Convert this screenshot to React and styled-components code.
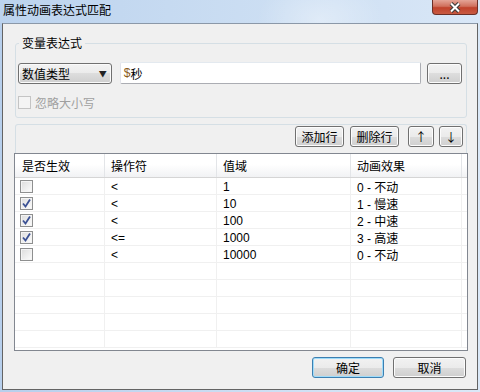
import React from 'react';
import styled, { createGlobalStyle } from 'styled-components';

const GlobalStyle = createGlobalStyle`
  html, body {
    margin: 0;
    padding: 0;
    background: #c8dcf2;
  }
  body {
    font-family: "Liberation Sans", "Noto Sans CJK SC", sans-serif;
    font-size: 12px;
    color: #000;
  }
`;

const rows = [
  { on: false, op: '<', range: '1', effect: '0 - 不动' },
  { on: true, op: '<', range: '10', effect: '1 - 慢速' },
  { on: true, op: '<', range: '100', effect: '2 - 中速' },
  { on: true, op: '<=', range: '1000', effect: '3 - 高速' },
  { on: false, op: '<', range: '10000', effect: '0 - 不动' },
  null,
  null,
  null,
  null,
  null,
];

const CheckBox = ({ checked, disabled }) => (
  <Box $disabled={disabled}>
    {checked && (
      <svg width="11" height="11" viewBox="0 0 11 11">
        <path d="M2 5.5 L4.5 8.5 L9 1.5" fill="none" stroke="#3b5194" strokeWidth="1.8" />
      </svg>
    )}
  </Box>
);

const App = () => {
  return (
    <Window>
      <GlobalStyle />
      <TitleBar>
        <Title>属性动画表达式匹配</Title>
        <CloseButton>
          <svg width="14" height="11" viewBox="0 0 14 11">
            <path d="M3 1.5 L11 9.5 M11 1.5 L3 9.5" stroke="#3a3a3a" strokeWidth="4" />
            <path d="M3 1.5 L11 9.5 M11 1.5 L3 9.5" stroke="#fff" strokeWidth="2" />
          </svg>
        </CloseButton>
      </TitleBar>

      <Client>
        <Group>
          <Legend>变量表达式</Legend>
          <ExprRow>
            <Select>
              <span>数值类型</span>
              <Arrow>▼</Arrow>
            </Select>
            <Input>
              <Dollar>$</Dollar>秒
            </Input>
            <Button $w={35}>...</Button>
          </ExprRow>
          <CheckRow>
            <CheckBox disabled />
            <Label $disabled>忽略大小写</Label>
          </CheckRow>
        </Group>

        <Panel>
          <Toolbar>
            <Button $w={49}>添加行</Button>
            <Button $w={49}>删除行</Button>
            <Button $w={26} $gap={9}>↑</Button>
            <Button $w={24} $gap={5}>↓</Button>
          </Toolbar>

          <Grid>
            <HeadRow>
              <HeadCell $first>是否生效</HeadCell>
              <HeadCell>操作符</HeadCell>
              <HeadCell>值域</HeadCell>
              <HeadCell>动画效果</HeadCell>
              <HeadCell $filler />
            </HeadRow>
            {rows.map((r, i) => (
              <Row key={i}>
                <Cell $check>{r && <CheckBox checked={r.on} />}</Cell>
                <Cell>{r && r.op}</Cell>
                <Cell>{r && r.range}</Cell>
                <Cell>{r && r.effect}</Cell>
                <Cell $filler />
              </Row>
            ))}
          </Grid>
        </Panel>

        <Footer>
          <Button $w={72} $h={21} $primary>确定</Button>
          <Button $w={73} $h={21} $gap={9}>取消</Button>
        </Footer>
      </Client>
    </Window>
  );
};

const Window = styled.div`
  width: 480px;
  height: 392px;
  display: flex;
  flex-direction: column;
  background: linear-gradient(to right, #b7cfec, #cfe0f4 60%, #dae8f7);
  overflow: hidden;
`;

const TitleBar = styled.div`
  height: 23px;
  display: flex;
  align-items: flex-start;
  justify-content: space-between;
  background:
    radial-gradient(ellipse 90px 60px at 320px 20px, rgba(255, 255, 255, 0.35), transparent 70%),
    linear-gradient(to right, #bcd3ee, #cddff3 60%, #d9e7f7);
`;

const Title = styled.div`
  padding: 3px 0 0 3px;
  line-height: 14px;
  font-family: "Noto Sans CJK SC", sans-serif;
  font-size: 12px;
  color: #000;
`;

const CloseButton = styled.div`
  width: 44px;
  height: 14px;
  margin-right: 2px;
  border: 1px solid #6b2f27;
  border-top: none;
  border-radius: 0 0 4px 4px;
  background: linear-gradient(#e4a497 0%, #d0705d 45%, #c0422c 55%, #c85a42 100%);
  display: flex;
  align-items: center;
  justify-content: center;
`;

const Client = styled.div`
  flex: 1;
  margin: 0 2px 2px 2px;
  border: 1px solid #646464;
  border-top-color: #8b98a8;
  background: #f0f0f0;
  padding: 12px 10px 0 12px;
  display: flex;
  flex-direction: column;
`;

const Group = styled.fieldset`
  margin: 0;
  min-width: 0;
  padding: 0 4px 8px 2px;
  border: 1px solid #d5dfe5;
  border-radius: 3px;
`;

const Legend = styled.legend`
  margin-left: 1px;
  padding: 0 3px;
  line-height: 14px;
  font-family: "Noto Sans CJK SC", sans-serif;
  font-size: 12px;
`;

const ExprRow = styled.div`
  margin-top: 12px;
  height: 22px;
  display: flex;
  align-items: center;
`;

const Select = styled.div`
  width: 94px;
  height: 21px;
  box-sizing: border-box;
  border: 1px solid #707070;
  border-radius: 3px;
  background: linear-gradient(#f2f2f2 0%, #ebebeb 50%, #dddddd 50%, #cfcfcf 100%);
  box-shadow: inset 0 0 0 1px #fafafa;
  display: flex;
  align-items: center;
  justify-content: space-between;
  padding: 0 4px 0 3px;
  font-family: "Noto Sans CJK SC", sans-serif;
`;

const Arrow = styled.span`
  font-size: 8px;
  color: #222;
`;

const Input = styled.div`
  width: 302px;
  height: 22px;
  box-sizing: border-box;
  margin-left: 8px;
  border: 1px solid #abadb3;
  border-top-color: #e3e9ef;
  border-left-color: #e2e3ea;
  border-radius: 2px;
  background: #fff;
  padding-left: 3px;
  display: flex;
  align-items: center;
  font-family: "Liberation Sans", "Noto Sans CJK SC", sans-serif;
`;

const Dollar = styled.span`
  color: #8a5a20;
`;

const Button = styled.div`
  width: ${(p) => p.$w}px;
  height: ${(p) => p.$h || 21}px;
  margin-left: ${(p) => p.$gap ?? 6}px;
  box-sizing: border-box;
  border: 1px solid ${(p) => (p.$primary ? '#3c7fb1' : '#707070')};
  border-radius: 3px;
  background: linear-gradient(#f2f2f2 0%, #ebebeb 50%, #dddddd 50%, #cfcfcf 100%);
  box-shadow: inset 0 0 0 1px ${(p) => (p.$primary ? '#9fdcfa' : '#fcfcfc')};
  display: flex;
  align-items: center;
  justify-content: center;
  font-family: "Noto Sans CJK SC", "Liberation Sans", sans-serif;
  font-size: 12px;
  flex: none;
`;

const CheckRow = styled.div`
  margin-top: 11px;
  height: 14px;
  display: flex;
  align-items: center;
`;

const Box = styled.div`
  width: 13px;
  height: 13px;
  box-sizing: border-box;
  border: 1px solid ${(p) => (p.$disabled ? '#c4c4c4' : '#8e8f8f')};
  background: ${(p) =>
    p.$disabled ? '#f4f4f4' : 'linear-gradient(135deg, #dcdcdc, #fdfdfd)'};
  box-shadow: inset 0 0 0 1px #f4f4f4;
  display: flex;
  align-items: center;
  justify-content: center;
  flex: none;
`;

const Label = styled.span`
  margin-left: 4px;
  font-family: "Noto Sans CJK SC", sans-serif;
  color: ${(p) => (p.$disabled ? '#a0a0a0' : '#000')};
`;

const Panel = styled.div`
  margin-top: 6px;
  border: 1px solid #d5dfe5;
  border-bottom: none;
  border-radius: 3px 3px 0 0;
  padding-top: 1px;
  display: flex;
  flex-direction: column;
`;

const Toolbar = styled.div`
  height: 21px;
  padding-right: 3px;
  display: flex;
  justify-content: flex-end;
`;

const Grid = styled.div`
  margin: 6px -2px 0 -2px;
  height: 198px;
  box-sizing: border-box;
  border: 1px solid #828790;
  background: #fff;
`;

const columns = '90px 112px 134px 111px 1fr';

const HeadRow = styled.div`
  display: grid;
  grid-template-columns: ${columns};
  height: 24px;
  box-sizing: border-box;
  border-bottom: 1px solid #d5d5d5;
  background: linear-gradient(#ffffff 0%, #ffffff 45%, #f1f2f4 100%);
`;

const HeadCell = styled.div`
  display: flex;
  align-items: center;
  padding-left: ${(p) => (p.$first ? 7 : 6)}px;
  border-right: ${(p) => (p.$filler ? 'none' : '1px solid #e3e5e8')};
  font-family: "Noto Sans CJK SC", sans-serif;
`;

const Row = styled.div`
  display: grid;
  grid-template-columns: ${columns};
  height: 17px;
  box-sizing: border-box;
  border-bottom: 1px solid #f0f0f0;
`;

const Cell = styled.div`
  display: flex;
  align-items: center;
  padding-left: ${(p) => (p.$check ? 5 : 6)}px;
  border-right: ${(p) => (p.$filler ? 'none' : '1px solid #f0f0f0')};
  font-family: "Liberation Sans", "Noto Sans CJK SC", sans-serif;
  white-space: nowrap;
`;

const Footer = styled.div`
  margin-top: 6px;
  display: flex;
  justify-content: flex-end;
  padding-right: 1px;
`;

export default App;
